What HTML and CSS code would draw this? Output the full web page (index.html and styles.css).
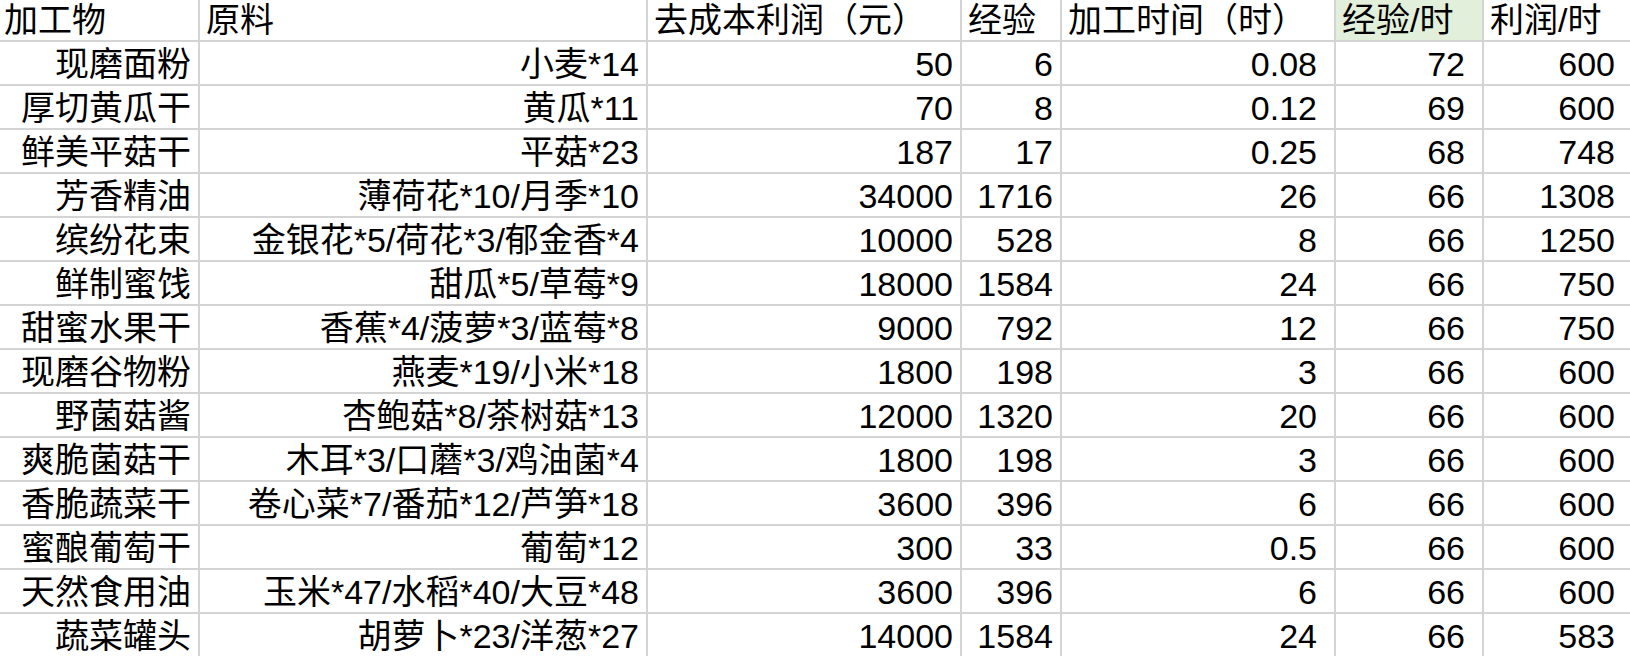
FILE: index.html
```html
<!DOCTYPE html>
<html lang="zh-CN">
<head>
<meta charset="utf-8">
<title>加工物</title>
<link rel="stylesheet" href="styles.css">
</head>
<body>
<div class="sheet">
  <div class="row head">
    <div class="cell first">加工物</div>
    <div class="cell">原料</div>
    <div class="cell">去成本利润（元）</div>
    <div class="cell">经验</div>
    <div class="cell">加工时间（时）</div>
    <div class="cell hl">经验/时</div>
    <div class="cell">利润/时</div>
  </div>
  <div class="row"><div class="cell">现磨面粉</div><div class="cell">小麦*14</div><div class="cell">50</div><div class="cell">6</div><div class="cell wide">0.08</div><div class="cell wide">72</div><div class="cell wide">600</div></div>
  <div class="row"><div class="cell">厚切黄瓜干</div><div class="cell">黄瓜*11</div><div class="cell">70</div><div class="cell">8</div><div class="cell wide">0.12</div><div class="cell wide">69</div><div class="cell wide">600</div></div>
  <div class="row"><div class="cell">鲜美平菇干</div><div class="cell">平菇*23</div><div class="cell">187</div><div class="cell">17</div><div class="cell wide">0.25</div><div class="cell wide">68</div><div class="cell wide">748</div></div>
  <div class="row"><div class="cell">芳香精油</div><div class="cell">薄荷花*10/月季*10</div><div class="cell">34000</div><div class="cell">1716</div><div class="cell wide">26</div><div class="cell wide">66</div><div class="cell wide">1308</div></div>
  <div class="row"><div class="cell">缤纷花束</div><div class="cell">金银花*5/荷花*3/郁金香*4</div><div class="cell">10000</div><div class="cell">528</div><div class="cell wide">8</div><div class="cell wide">66</div><div class="cell wide">1250</div></div>
  <div class="row"><div class="cell">鲜制蜜饯</div><div class="cell">甜瓜*5/草莓*9</div><div class="cell">18000</div><div class="cell">1584</div><div class="cell wide">24</div><div class="cell wide">66</div><div class="cell wide">750</div></div>
  <div class="row"><div class="cell">甜蜜水果干</div><div class="cell">香蕉*4/菠萝*3/蓝莓*8</div><div class="cell">9000</div><div class="cell">792</div><div class="cell wide">12</div><div class="cell wide">66</div><div class="cell wide">750</div></div>
  <div class="row"><div class="cell">现磨谷物粉</div><div class="cell">燕麦*19/小米*18</div><div class="cell">1800</div><div class="cell">198</div><div class="cell wide">3</div><div class="cell wide">66</div><div class="cell wide">600</div></div>
  <div class="row"><div class="cell">野菌菇酱</div><div class="cell">杏鲍菇*8/茶树菇*13</div><div class="cell">12000</div><div class="cell">1320</div><div class="cell wide">20</div><div class="cell wide">66</div><div class="cell wide">600</div></div>
  <div class="row"><div class="cell">爽脆菌菇干</div><div class="cell">木耳*3/口蘑*3/鸡油菌*4</div><div class="cell">1800</div><div class="cell">198</div><div class="cell wide">3</div><div class="cell wide">66</div><div class="cell wide">600</div></div>
  <div class="row"><div class="cell">香脆蔬菜干</div><div class="cell">卷心菜*7/番茄*12/芦笋*18</div><div class="cell">3600</div><div class="cell">396</div><div class="cell wide">6</div><div class="cell wide">66</div><div class="cell wide">600</div></div>
  <div class="row"><div class="cell">蜜酿葡萄干</div><div class="cell">葡萄*12</div><div class="cell">300</div><div class="cell">33</div><div class="cell wide">0.5</div><div class="cell wide">66</div><div class="cell wide">600</div></div>
  <div class="row"><div class="cell">天然食用油</div><div class="cell">玉米*47/水稻*40/大豆*48</div><div class="cell">3600</div><div class="cell">396</div><div class="cell wide">6</div><div class="cell wide">66</div><div class="cell wide">600</div></div>
  <div class="row"><div class="cell">蔬菜罐头</div><div class="cell">胡萝卜*23/洋葱*27</div><div class="cell">14000</div><div class="cell">1584</div><div class="cell wide">24</div><div class="cell wide">66</div><div class="cell wide">583</div></div>
</div>
</body>
</html>
```

FILE: styles.css
```css
html, body {
  margin: 0;
  padding: 0;
  background: #ffffff;
  overflow: hidden;
}

body {
  width: 1630px;
  height: 656px;
  font-family: "Liberation Sans", "Noto Sans CJK SC", sans-serif;
  font-size: 34px;
  color: #000000;
}

.sheet {
  margin-top: -2px;
  width: 1634px;
}

.row {
  display: grid;
  grid-template-columns: 200px 448px 314px 100px 274px 148px 150px;
  height: 44px;
  box-sizing: border-box;
  border-bottom: 2px solid #d4d4d4;
}

.cell {
  box-sizing: border-box;
  border-right: 2px solid #d4d4d4;
  padding: 3px 7px 0 7px;
  line-height: 39px;
  white-space: nowrap;
  overflow: hidden;
  text-align: right;
}

.cell.wide {
  padding-right: 17px;
}

.head .cell {
  text-align: left;
  padding-left: 6px;
}

.head .cell.first {
  padding-left: 4px;
}

.head .cell.hl {
  background: #e2efda;
}
```
